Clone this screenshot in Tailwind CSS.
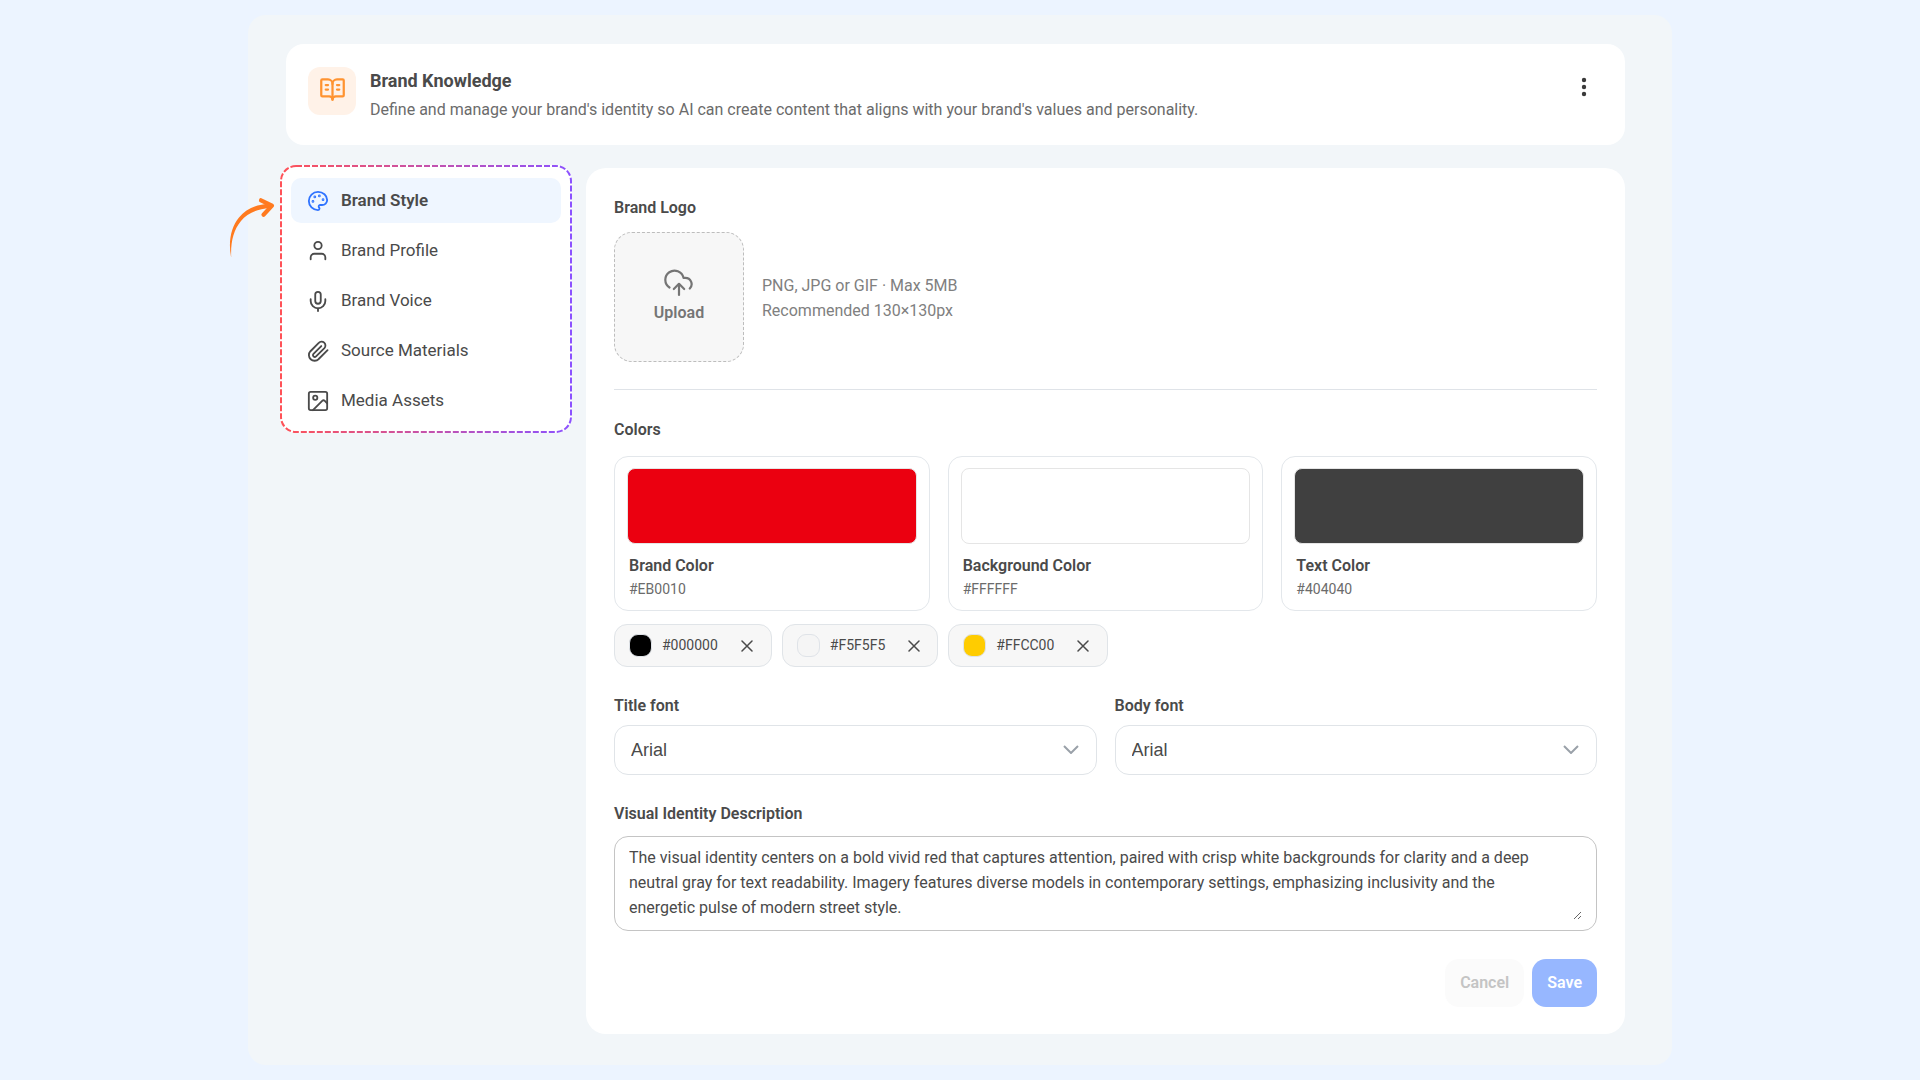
<!DOCTYPE html>
<html lang="en">

<head>
    <meta charset="UTF-8">
    <meta name="viewport" content="width=device-width, initial-scale=1.0">
    <title>Brand Knowledge</title>
    <script src="https://cdn.jsdelivr.net/npm/@tailwindcss/browser@4"></script>
</head>

<body class="min-h-screen bg-[#ecf4ff] py-[15px] font-['Roboto',sans-serif] text-[#4a4a4a]">

    <div class="mx-auto w-full max-w-[1424px] rounded-[18px] bg-[#f2f6f9] pt-[29px] pr-[47px] pb-[31px] pl-[38px]">

        <!-- Header -->
        <header class="flex items-start rounded-[18px] bg-white px-[22px] py-[23px]">
            <div class="flex size-12 shrink-0 items-center justify-center rounded-xl bg-[#fff2e8] pb-[3px] text-[#ff9330]">
                <svg class="size-[27px]" viewBox="0 0 24 24" fill="none" stroke="currentColor" stroke-width="2" stroke-linecap="round" stroke-linejoin="round">
                    <path d="M12 7v14" />
                    <path d="M16 12h2" />
                    <path d="M16 8h2" />
                    <path d="M3 18a1 1 0 0 1-1-1V4a1 1 0 0 1 1-1h5a4 4 0 0 1 4 4 4 4 0 0 1 4-4h5a1 1 0 0 1 1 1v13a1 1 0 0 1-1 1h-6a3 3 0 0 0-3 3 3 3 0 0 0-3-3z" />
                    <path d="M6 12h2" />
                    <path d="M6 8h2" />
                </svg>
            </div>
            <div class="ml-[14px] flex-1">
                <h1 class="text-[18px] leading-7 font-bold">Brand Knowledge</h1>
                <p class="mt-[3px] text-[16px] leading-6 text-[#6b6b6b]">Define and manage your brand's identity so AI can create content that aligns with your brand's values and personality.</p>
            </div>
            <button type="button" aria-label="More options" class="mt-2 mr-[7px] flex size-6 items-center justify-center text-[#3a3a3a]">
                <svg class="size-6" viewBox="0 0 24 24" fill="currentColor">
                    <circle cx="12" cy="5" r="2.2" />
                    <circle cx="12" cy="12" r="2.2" />
                    <circle cx="12" cy="19" r="2.2" />
                </svg>
            </button>
        </header>

        <div class="mt-5 flex items-start gap-[14px]">

            <!-- Section menu -->
            <nav class="relative -ml-[6px] w-[292px] shrink-0 rounded-[16px] bg-white px-[11px] pt-[13px] pb-[10px]">
                <svg class="pointer-events-none absolute inset-0 h-full w-full" fill="none">
                    <defs>
                        <linearGradient id="frame" x1="0" y1="0" x2="1" y2="0">
                            <stop offset="0" stop-color="#ff5257" />
                            <stop offset="1" stop-color="#8c52ff" />
                        </linearGradient>
                    </defs>
                    <rect x="1" y="1" rx="15" class="h-[calc(100%-2px)] w-[calc(100%-2px)]" stroke="url(#frame)" stroke-width="2" stroke-dasharray="6 2" />
                </svg>
                <!-- Pointer arrow -->
                <svg class="absolute top-[31px] -left-[51px] h-[62px] w-[48px]" viewBox="0 0 48 62" fill="#ff7a1f">
                    <path d="M2.200 61.500C-1 46 2 31 10 21.500 17 13 27 8.500 41 7.500L41 12C28 13 18 17.500 12 25 4.500 34 1.500 46 2.200 61.500z" />
                    <path d="M32 4.300L43 9.600 34.500 18.800" fill="none" stroke="#ff7a1f" stroke-width="4.200" stroke-linecap="round" stroke-linejoin="round" />
                </svg>
                <ul class="flex flex-col gap-[5px] text-[17px] leading-[45px]">
                    <li>
                        <a href="#" class="flex items-center rounded-[10px] bg-[#eff6ff] pl-4 font-semibold">
                            <svg class="mr-3 size-[22px] text-[#2f73ff]" viewBox="0 0 24 24" fill="none" stroke="currentColor" stroke-width="2" stroke-linecap="round" stroke-linejoin="round">
                                <circle cx="13.5" cy="6.5" r=".5" fill="currentColor" />
                                <circle cx="17.5" cy="10.5" r=".5" fill="currentColor" />
                                <circle cx="8.5" cy="7.5" r=".5" fill="currentColor" />
                                <circle cx="6.5" cy="12.5" r=".5" fill="currentColor" />
                                <path d="M12 2C6.500 2 2 6.500 2 12s4.500 10 10 10c.926 0 1.648-.746 1.648-1.688 0-.437-.18-.835-.437-1.125-.29-.289-.438-.652-.438-1.125a1.640 1.640 0 0 1 1.668-1.668h1.996c3.051 0 5.555-2.503 5.555-5.554C21.965 6.012 17.461 2 12 2z" />
                            </svg>
                            Brand Style
                        </a>
                    </li>
                    <li>
                        <a href="#" class="flex items-center pl-4">
                            <svg class="mr-3 size-[22px]" viewBox="0 0 24 24" fill="none" stroke="currentColor" stroke-width="2" stroke-linecap="round" stroke-linejoin="round">
                                <path d="M20 21v-2a4 4 0 0 0-4-4H8a4 4 0 0 0-4 4v2" />
                                <circle cx="12" cy="6" r="4" />
                            </svg>
                            Brand Profile
                        </a>
                    </li>
                    <li>
                        <a href="#" class="flex items-center pl-4">
                            <svg class="mr-3 size-[22px]" viewBox="0 0 24 24" fill="none" stroke="currentColor" stroke-width="2" stroke-linecap="round" stroke-linejoin="round">
                                <path d="M12 2a3 3 0 0 0-3 3v7a3 3 0 0 0 6 0V5a3 3 0 0 0-3-3Z" />
                                <path d="M20 10v2a8 8 0 0 1-16 0v-2" />
                                <path d="M12 20v3" />
                            </svg>
                            Brand Voice
                        </a>
                    </li>
                    <li>
                        <a href="#" class="flex items-center pl-4">
                            <svg class="mr-3 size-[22px]" viewBox="0 0 24 24" fill="none" stroke="currentColor" stroke-width="2" stroke-linecap="round" stroke-linejoin="round">
                                <path d="m22.440 11.050-9.690 9.690a6 6 0 0 1-8.990-8.490l9.070-9.070A4 4 0 1 1 19 8.840l-9.090 9.070a2 2 0 0 1-2.830-2.830l8.490-8.480" />
                            </svg>
                            Source Materials
                        </a>
                    </li>
                    <li>
                        <a href="#" class="flex items-center pl-4">
                            <svg class="mr-3 size-[22px]" viewBox="0 0 24 24" fill="none" stroke="currentColor" stroke-width="2" stroke-linecap="round" stroke-linejoin="round">
                                <rect x="2" y="2" width="20" height="20" rx="2" />
                                <circle cx="9" cy="8.5" r="2.300" />
                                <path d="m22 14.500-2.586-2.586a2 2 0 0 0-2.828 0L6.500 22" />
                            </svg>
                            Media Assets
                        </a>
                    </li>
                </ul>
            </nav>

            <!-- Brand style form -->
            <main class="mt-[3px] min-w-0 flex-1 rounded-[20px] bg-white px-7 pt-7 pb-[27px]">
                <form>
                    <section>
                        <h2 class="text-[16px] leading-6 font-semibold">Brand Logo</h2>
                        <div class="mt-3 flex items-center gap-[18px]">
                            <button type="button" class="flex size-[130px] flex-col items-center justify-center gap-1 rounded-[18px] border border-dashed border-[#bdbdbd] bg-[#f7f7f7] text-[16px] leading-6 font-semibold text-[#757575]">
                                <svg class="h-[28px] w-[30px]" viewBox="0 0 30 28" fill="none" stroke="currentColor" stroke-width="2.200" stroke-linecap="round" stroke-linejoin="round">
                                    <path d="M5.500 18.500A9.200 9.200 0 1 1 19.500 8.800h1.700a6.300 6.300 0 0 1 4.600 10.700" />
                                    <path d="M15 26V15" />
                                    <path d="m9.800 20 5.200-5.200 5.200 5.200" />
                                </svg>
                                Upload
                            </button>
                            <p class="pt-[2px] text-[16px] leading-[25px] text-[#808080]">PNG, JPG or GIF · Max 5MB<br>Recommended 130×130px</p>
                        </div>
                    </section>

                    <hr class="mt-[27px] border-[#dfe3e8]">

                    <section class="mt-[28px]">
                        <h2 class="text-[16px] leading-6 font-semibold">Colors</h2>
                        <div class="mt-[14px] grid grid-cols-3 gap-[18px]">
                            <div class="rounded-[14px] border border-[#e3e7eb] px-3 pt-[11px] pb-[10px]">
                                <div class="h-[76px] rounded-lg border border-[#e5e5e5] bg-[#eb0010]"></div>
                                <h3 class="mt-[10px] pl-[2px] text-[16px] leading-6 font-semibold">Brand Color</h3>
                                <p class="pl-[2px] text-[14px] leading-[22px] text-[#6b6b6b]">#EB0010</p>
                            </div>
                            <div class="rounded-[14px] border border-[#e3e7eb] px-3 pt-[11px] pb-[10px]">
                                <div class="h-[76px] rounded-lg border border-[#e5e5e5] bg-white"></div>
                                <h3 class="mt-[10px] pl-[2px] text-[16px] leading-6 font-semibold">Background Color</h3>
                                <p class="pl-[2px] text-[14px] leading-[22px] text-[#6b6b6b]">#FFFFFF</p>
                            </div>
                            <div class="rounded-[14px] border border-[#e3e7eb] px-3 pt-[11px] pb-[10px]">
                                <div class="h-[76px] rounded-lg border border-[#e5e5e5] bg-[#404040]"></div>
                                <h3 class="mt-[10px] pl-[2px] text-[16px] leading-6 font-semibold">Text Color</h3>
                                <p class="pl-[2px] text-[14px] leading-[22px] text-[#6b6b6b]">#404040</p>
                            </div>
                        </div>
                        <ul class="mt-[13px] flex flex-wrap gap-[10px] text-[14px] leading-[41px]">
                            <li class="flex items-center rounded-[13px] border border-[#e0e4e8] bg-[#f7f7f7] pr-[18px] pl-[14px]">
                                <span class="mr-[10px] size-[23px] rounded-[9px] border border-[#dfe3e8] bg-black"></span>
                                #000000
                                <button type="button" aria-label="Remove #000000" class="ml-[23px]">
                                    <svg class="size-3" viewBox="0 0 12 12" fill="none" stroke="currentColor" stroke-width="1.500" stroke-linecap="round"><path d="M1 1l10 10M11 1L1 11" /></svg>
                                </button>
                            </li>
                            <li class="flex items-center rounded-[13px] border border-[#e0e4e8] bg-[#f7f7f7] pr-[17px] pl-[14px]">
                                <span class="mr-[10px] size-[23px] rounded-[9px] border border-[#dfe3e8] bg-[#f5f5f5]"></span>
                                #F5F5F5
                                <button type="button" aria-label="Remove #F5F5F5" class="ml-[23px]">
                                    <svg class="size-3" viewBox="0 0 12 12" fill="none" stroke="currentColor" stroke-width="1.500" stroke-linecap="round"><path d="M1 1l10 10M11 1L1 11" /></svg>
                                </button>
                            </li>
                            <li class="flex items-center rounded-[13px] border border-[#e0e4e8] bg-[#f7f7f7] pr-[18px] pl-[14px]">
                                <span class="mr-[10px] size-[23px] rounded-[9px] border border-[#dfe3e8] bg-[#ffcc00]"></span>
                                #FFCC00
                                <button type="button" aria-label="Remove #FFCC00" class="ml-[23px]">
                                    <svg class="size-3" viewBox="0 0 12 12" fill="none" stroke="currentColor" stroke-width="1.500" stroke-linecap="round"><path d="M1 1l10 10M11 1L1 11" /></svg>
                                </button>
                            </li>
                        </ul>
                    </section>

                    <section class="mt-[27px] grid grid-cols-2 gap-[18px]">
                        <div>
                            <label for="title-font" class="block text-[16px] leading-6 font-semibold">Title font</label>
                            <div class="relative mt-[7px]">
                                <select id="title-font" class="h-[50px] w-full appearance-none rounded-[14px] border border-[#e0e4e8] bg-white px-4 font-['Liberation_Sans',sans-serif] text-[18px]">
                                    <option>Arial</option>
                                </select>
                                <svg class="pointer-events-none absolute top-5 right-[18px] h-[9px] w-4" viewBox="0 0 16 9" fill="none" stroke="#9aa1a9" stroke-width="2"><path d="M1 1l7 7 7-7" /></svg>
                            </div>
                        </div>
                        <div>
                            <label for="body-font" class="block text-[16px] leading-6 font-semibold">Body font</label>
                            <div class="relative mt-[7px]">
                                <select id="body-font" class="h-[50px] w-full appearance-none rounded-[14px] border border-[#e0e4e8] bg-white px-4 font-['Liberation_Sans',sans-serif] text-[18px]">
                                    <option>Arial</option>
                                </select>
                                <svg class="pointer-events-none absolute top-5 right-[18px] h-[9px] w-4" viewBox="0 0 16 9" fill="none" stroke="#9aa1a9" stroke-width="2"><path d="M1 1l7 7 7-7" /></svg>
                            </div>
                        </div>
                    </section>

                    <section class="mt-[27px]">
                        <label for="description" class="block text-[16px] leading-6 font-semibold">Visual Identity Description</label>
                        <div class="mt-[10px] rounded-[14px] border border-[#c4c4c4] pt-2 pr-[14px] pb-[10px] pl-[14px]">
                            <textarea id="description" rows="3" class="block w-full overflow-hidden pr-[26px] text-[16px] leading-[25px] outline-none">The visual identity centers on a bold vivid red that captures attention, paired with crisp white backgrounds for clarity and a deep neutral gray for text readability. Imagery features diverse models in contemporary settings, emphasizing inclusivity and the energetic pulse of modern street style.</textarea>
                        </div>
                    </section>

                    <div class="mt-7 flex justify-end gap-2 text-[16px] leading-[48px] font-semibold">
                        <button type="button" disabled class="rounded-[14px] bg-[#fbfbfb] px-[15px] text-[#c4c4c4]">Cancel</button>
                        <button type="submit" disabled class="rounded-[14px] bg-[#97b7ff] px-[15px] text-white">Save</button>
                    </div>
                </form>
            </main>
        </div>
    </div>

</body>

</html>
